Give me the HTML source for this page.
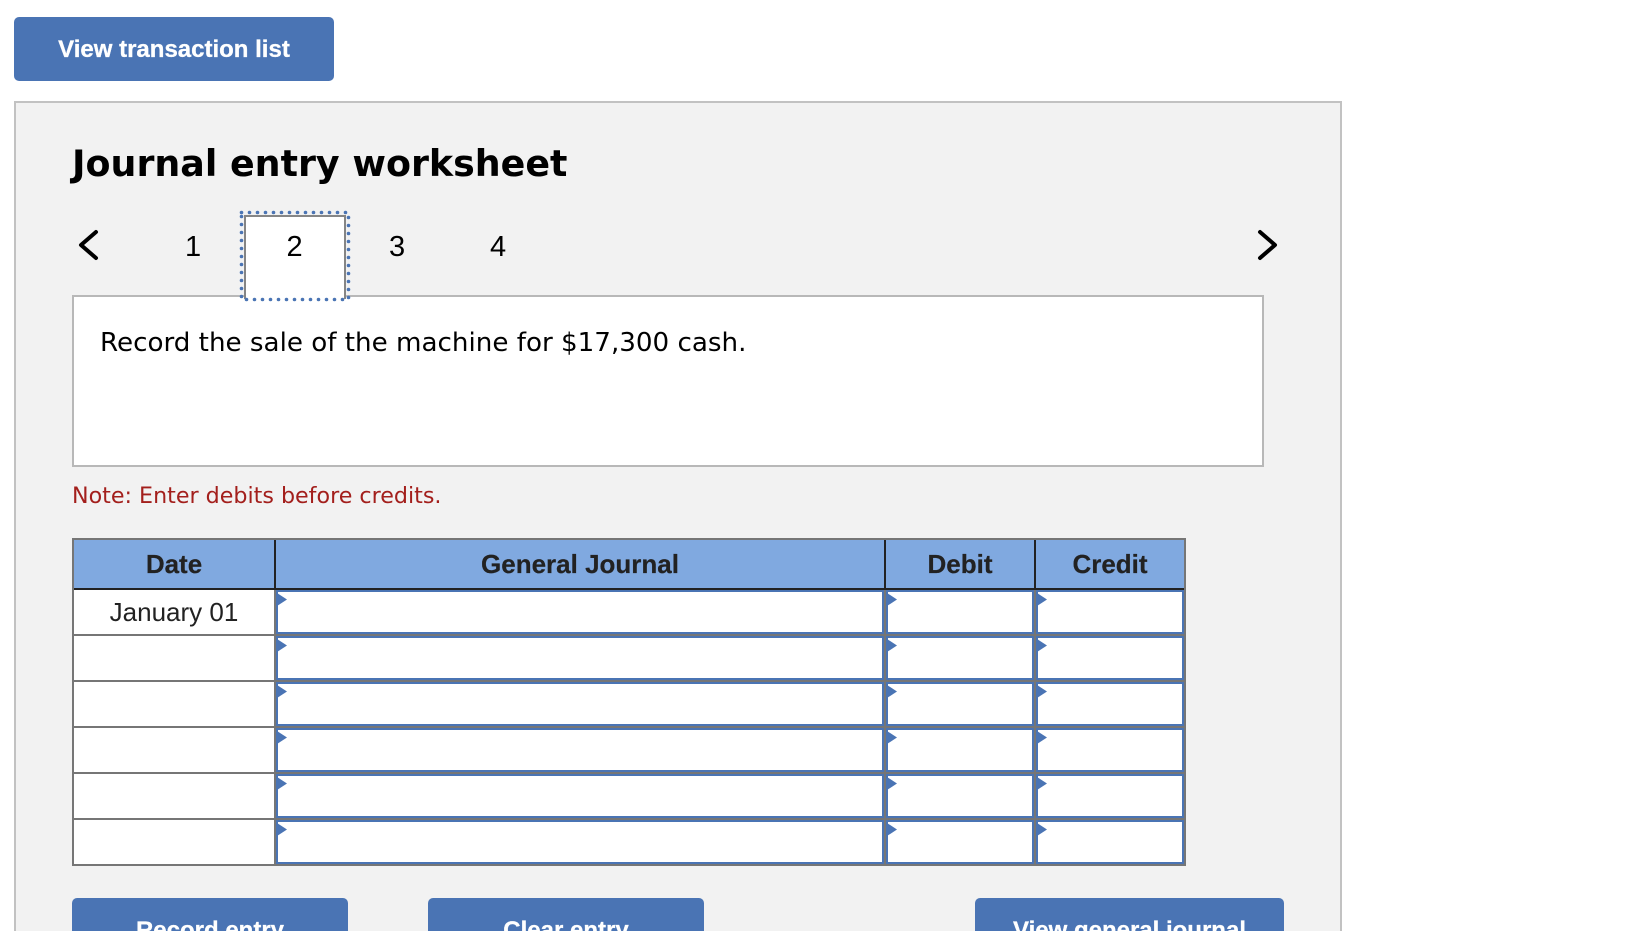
<!DOCTYPE html>
<html>
<head>
<meta charset="utf-8">
<style>
html,body{margin:0;padding:0;background:#fff;width:1632px;height:936px;overflow:hidden}
*{box-sizing:border-box}
.a{position:absolute}
.t{position:absolute;white-space:nowrap;line-height:1}
.sans{font-family:"Liberation Sans",sans-serif}
.dv{font-family:"DejaVu Sans",sans-serif}
.btn{position:absolute;background:#4a74b4;border-radius:5px;color:#fff;font:bold 24px/65px "Liberation Sans",sans-serif;text-align:center;overflow:hidden;-webkit-text-stroke:0.3px #fff}
.cut{border-radius:5px 5px 0 0;height:33px}
#clip{position:absolute;left:0;top:0;width:1632px;height:931px;overflow:hidden}
#panel{position:absolute;left:14px;top:101px;width:1328px;height:830px;background:#f2f2f2;border:2px solid #c2c2c2;border-bottom:none}
.g{position:absolute;background:#767676}
.k{position:absolute;background:#222}
.in{position:absolute;background:#fff;border:2px solid #4a74b4}
.tri{position:absolute;width:10px;height:13px;background:#4a74b4;clip-path:polygon(0 0,100% 50%,0 100%)}
.h{top:551px;font-size:26px;font-weight:bold;color:#222;text-align:center;-webkit-text-stroke:0.2px #222}
</style>
</head>
<body>
<div id="clip">
<div class="btn" style="left:14px;top:17px;width:320px;height:64px">View transaction list</div>
<div id="panel"></div>
<div class="t dv" style="left:72px;top:146px;font-size:36.4px;font-weight:bold;color:#000">Journal entry worksheet</div>

<svg class="a" style="left:0;top:0" width="1632" height="320">
<path d="M96 232 L81 245 L96 258" fill="none" stroke="#000" stroke-width="4" stroke-linecap="round" stroke-linejoin="round"/>
<path d="M1260 232 L1275 245 L1260 258" fill="none" stroke="#000" stroke-width="4" stroke-linecap="round" stroke-linejoin="round"/>
</svg>

<div class="a" style="left:72px;top:295px;width:1192px;height:172px;background:#fff;border:2px solid #b8b8b8"></div>
<div class="a" style="left:244px;top:215px;width:102px;height:84px;background:#fff;border:2px solid #858585;border-bottom:none"></div>
<svg class="a" style="left:238px;top:209px" width="114" height="94">
<rect x="3.500" y="3.500" width="107" height="87" fill="none" stroke="#4a74b4" stroke-width="3.600" stroke-linecap="round" stroke-dasharray="0 8"/>
</svg>
<div class="t sans" style="left:185px;top:233px;font-size:29px;color:#000">1</div>
<div class="t sans" style="left:286.500px;top:233px;font-size:29px;color:#000">2</div>
<div class="t sans" style="left:389px;top:233px;font-size:29px;color:#000">3</div>
<div class="t sans" style="left:490px;top:233px;font-size:29px;color:#000">4</div>

<div class="t dv" style="left:100px;top:330px;font-size:26.17px;color:#000">Record the sale of the machine for $17,300 cash.</div>
<div class="t dv" style="left:72px;top:485px;font-size:22.2px;color:#a31f1c">Note: Enter debits before credits.</div>

<div class="a" style="left:72px;top:538px;width:1114px;height:328px;background:#fff"></div>
<div class="a" style="left:72px;top:538px;width:1114px;height:52px;background:#80a9e0"></div>

<div class="in" style="left:276px;top:590px;width:608px;height:44px"></div><div class="in" style="left:886px;top:590px;width:148px;height:44px"></div><div class="in" style="left:1036px;top:590px;width:148px;height:44px"></div>
<div class="in" style="left:276px;top:636px;width:608px;height:44px"></div><div class="in" style="left:886px;top:636px;width:148px;height:44px"></div><div class="in" style="left:1036px;top:636px;width:148px;height:44px"></div>
<div class="in" style="left:276px;top:682px;width:608px;height:44px"></div><div class="in" style="left:886px;top:682px;width:148px;height:44px"></div><div class="in" style="left:1036px;top:682px;width:148px;height:44px"></div>
<div class="in" style="left:276px;top:728px;width:608px;height:44px"></div><div class="in" style="left:886px;top:728px;width:148px;height:44px"></div><div class="in" style="left:1036px;top:728px;width:148px;height:44px"></div>
<div class="in" style="left:276px;top:774px;width:608px;height:44px"></div><div class="in" style="left:886px;top:774px;width:148px;height:44px"></div><div class="in" style="left:1036px;top:774px;width:148px;height:44px"></div>
<div class="in" style="left:276px;top:820px;width:608px;height:44px"></div><div class="in" style="left:886px;top:820px;width:148px;height:44px"></div><div class="in" style="left:1036px;top:820px;width:148px;height:44px"></div>

<div class="g" style="left:72px;top:538px;width:1114px;height:2px"></div>
<div class="g" style="left:72px;top:538px;width:2px;height:328px"></div>
<div class="g" style="left:1184px;top:538px;width:2px;height:328px"></div>
<div class="g" style="left:72px;top:864px;width:1114px;height:2px"></div>
<div class="g" style="left:72px;top:634px;width:1114px;height:2px"></div>
<div class="g" style="left:72px;top:680px;width:1114px;height:2px"></div>
<div class="g" style="left:72px;top:726px;width:1114px;height:2px"></div>
<div class="g" style="left:72px;top:772px;width:1114px;height:2px"></div>
<div class="g" style="left:72px;top:818px;width:1114px;height:2px"></div>
<div class="g" style="left:274px;top:590px;width:2px;height:276px"></div>
<div class="g" style="left:884px;top:590px;width:2px;height:276px"></div>
<div class="g" style="left:1034px;top:590px;width:2px;height:276px"></div>
<div class="k" style="left:274px;top:540px;width:2px;height:49px"></div>
<div class="k" style="left:884px;top:540px;width:2px;height:49px"></div>
<div class="k" style="left:1034px;top:540px;width:2px;height:49px"></div>
<div class="k" style="left:74px;top:588px;width:1110px;height:2px"></div>

<div class="tri" style="left:277px;top:593px"></div><div class="tri" style="left:887px;top:593px"></div><div class="tri" style="left:1037px;top:593px"></div>
<div class="tri" style="left:277px;top:639px"></div><div class="tri" style="left:887px;top:639px"></div><div class="tri" style="left:1037px;top:639px"></div>
<div class="tri" style="left:277px;top:685px"></div><div class="tri" style="left:887px;top:685px"></div><div class="tri" style="left:1037px;top:685px"></div>
<div class="tri" style="left:277px;top:731px"></div><div class="tri" style="left:887px;top:731px"></div><div class="tri" style="left:1037px;top:731px"></div>
<div class="tri" style="left:277px;top:777px"></div><div class="tri" style="left:887px;top:777px"></div><div class="tri" style="left:1037px;top:777px"></div>
<div class="tri" style="left:277px;top:823px"></div><div class="tri" style="left:887px;top:823px"></div><div class="tri" style="left:1037px;top:823px"></div>

<div class="t sans h" style="left:74px;width:200px">Date</div>
<div class="t sans h" style="left:276px;width:608px">General Journal</div>
<div class="t sans h" style="left:886px;width:148px">Debit</div>
<div class="t sans h" style="left:1036px;width:148px">Credit</div>
<div class="t sans" style="left:74px;width:200px;text-align:center;top:599px;font-size:26px;color:#222">January 01</div>

<div class="btn cut" style="left:72px;top:898px;width:276px">Record entry</div>
<div class="btn cut" style="left:428px;top:898px;width:276px">Clear entry</div>
<div class="btn cut" style="left:975px;top:898px;width:309px">View general journal</div>
</div>
</body>
</html>
